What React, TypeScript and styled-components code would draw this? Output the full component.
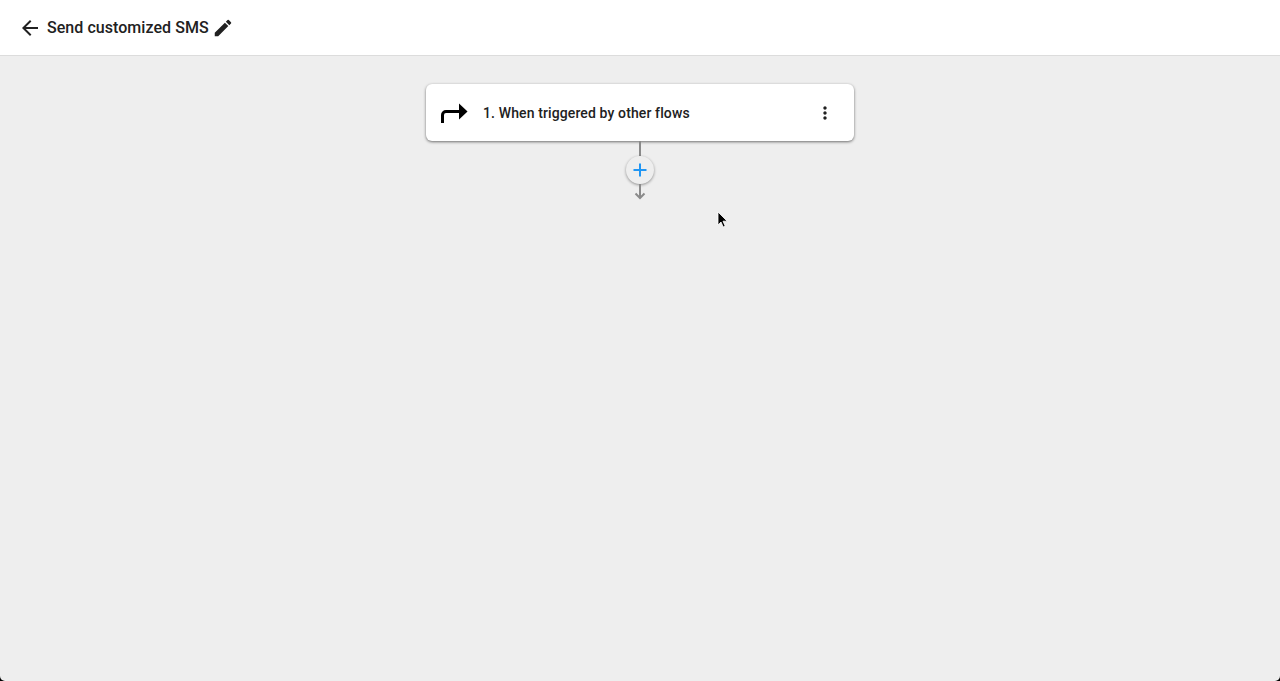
import React from 'react';
import styled, { createGlobalStyle } from 'styled-components';

const GlobalStyle = createGlobalStyle`
  html, body {
    margin: 0;
    padding: 0;
    height: 100%;
    background: #000;
    overflow: hidden;
  }
  #root {
    height: 100%;
  }
`;

const App = () => {
  return (
    <>
      <GlobalStyle />
      <Page>
        <Header>
          <IconButton aria-label="Back">
            <svg width="24" height="24" viewBox="0 0 24 24" fill="#212121">
              <path d="M20 11H7.83l5.59-5.59L12 4l-8 8 8 8 1.41-1.41L7.83 13H20v-2z" />
            </svg>
          </IconButton>
          <Title>Send customized SMS</Title>
          <EditIcon width="22" height="22" viewBox="0 0 24 24" fill="#212121">
            <path d="M3 17.25V21h3.75L17.81 9.94l-3.75-3.75L3 17.25zM20.71 7.04a1 1 0 0 0 0-1.41l-2.34-2.34a1 1 0 0 0-1.41 0l-1.83 1.83 3.75 3.75 1.83-1.83z" />
          </EditIcon>
        </Header>
        <Canvas>
          <StepCard>
            <TriggerIcon width="28" height="22" viewBox="0 0 28 22">
              <path d="M2.5 21v-8a3.5 3.5 0 0 1 3.5-3.5H20" fill="none" stroke="#000" strokeWidth="3" />
              <path d="M19 1.5 27.5 9.5 19 17.5z" fill="#000" />
            </TriggerIcon>
            <StepLabel>1. When triggered by other flows</StepLabel>
            <MoreIcon width="20" height="20" viewBox="0 0 24 24" fill="#212121">
              <path d="M12 8c1.1 0 2-.9 2-2s-.9-2-2-2-2 .9-2 2 .9 2 2 2zm0 2c-1.1 0-2 .9-2 2s.9 2 2 2 2-.9 2-2-.9-2-2-2zm0 6c-1.1 0-2 .9-2 2s.9 2 2 2 2-.9 2-2-.9-2-2-2z" />
            </MoreIcon>
          </StepCard>
          <Connector />
          <AddButton aria-label="Add step">
            <PlusIcon width="14" height="14" viewBox="0 0 14 14" fill="none" stroke="#2196f3" strokeWidth="2">
              <path d="M7 0.5v13M0.5 7h13" />
            </PlusIcon>
          </AddButton>
          <ArrowDown width="12" height="16" viewBox="0 0 12 16" fill="none" stroke="#8a8a8a" strokeWidth="2">
            <path d="M6 0v14M1.5 9.5 6 14l4.5-4.5" />
          </ArrowDown>
          <Cursor width="12" height="18" viewBox="0 0 12 18">
            <path d="M1 1v13l3-3 2.2 5 2-.9L6 10.2h4.2z" fill="#000" stroke="#fff" strokeWidth="0.8" />
          </Cursor>
        </Canvas>
      </Page>
    </>
  );
};

const Page = styled.div`
  height: 681px;
  display: flex;
  flex-direction: column;
  background: #eeeeee;
  border-radius: 0 0 5px 5px;
  overflow: hidden;
  font-family: Roboto, 'Liberation Sans', sans-serif;
`;

const Header = styled.header`
  height: 55px;
  flex: none;
  display: flex;
  align-items: center;
  padding-left: 18px;
  background: #ffffff;
  border-bottom: 1px solid #dcdcdc;
`;

const IconButton = styled.button`
  width: 24px;
  height: 24px;
  padding: 0;
  border: none;
  background: none;
  display: flex;
`;

const Title = styled.h1`
  margin: 0 0 0 5px;
  font-size: 16px;
  line-height: 24px;
  font-weight: 500;
  letter-spacing: 0.05px;
  color: #212121;
`;

const EditIcon = styled.svg`
  margin-left: 3px;
`;

const Canvas = styled.main`
  position: relative;
  flex: 1;
  display: flex;
  flex-direction: column;
  align-items: center;
  padding-top: 28px;
`;

const StepCard = styled.div`
  width: 428px;
  height: 57px;
  box-sizing: border-box;
  display: flex;
  align-items: center;
  padding: 0 19px 0 14px;
  background: #ffffff;
  border-radius: 6px;
  box-shadow: 0 1px 3px rgba(0, 0, 0, 0.55);
`;

const TriggerIcon = styled.svg`
  flex: none;
`;

const StepLabel = styled.span`
  flex: 1;
  margin-left: 15px;
  font-size: 14px;
  line-height: 20px;
  font-weight: 500;
  letter-spacing: 0.12px;
  color: #212121;
`;

const MoreIcon = styled.svg`
  flex: none;
`;

const Connector = styled.div`
  width: 2px;
  height: 15px;
  background: #8a8a8a;
`;

const AddButton = styled.button`
  width: 28px;
  height: 28px;
  padding: 0;
  border: none;
  border-radius: 50%;
  background: #eeeeee;
  display: flex;
  align-items: center;
  justify-content: center;
  box-shadow: 0 1px 3px rgba(0, 0, 0, 0.4);
`;

const PlusIcon = styled.svg`
  margin-top: -1px;
`;

const ArrowDown = styled.svg`
  display: block;
`;

const Cursor = styled.svg`
  position: absolute;
  left: 717px;
  top: 155px;
`;

export default App;
